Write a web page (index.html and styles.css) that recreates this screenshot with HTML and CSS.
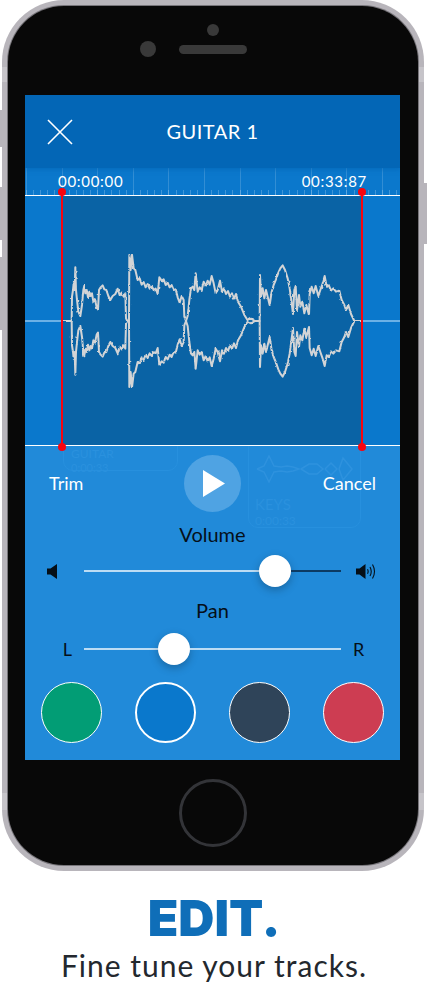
FILE: index.html
```html
<!DOCTYPE html>
<html lang="en">
<head>
    <meta charset="UTF-8">
    <meta name="viewport" content="width=device-width, initial-scale=1.0">
    <title>Edit</title>
    <link rel="stylesheet" href="styles.css">
</head>
<body>
    <div class="phone">
        <span class="side-btn side-mute"></span>
        <span class="side-btn side-up"></span>
        <span class="side-btn side-down"></span>
        <span class="side-btn side-power"></span>

        <div class="face">
            <div class="bezel-top">
                <span class="camera-dot"></span>
                <div class="sensors">
                    <span class="lens"></span>
                    <span class="speaker"></span>
                </div>
            </div>

            <div class="screen">
                <div class="header">
                    <svg class="close-icon" width="26" height="26" viewBox="0 0 26 26">
                        <path d="M1 1L25 25M25 1L1 25" stroke="#fff" stroke-width="1.6" fill="none"/>
                    </svg>
                    <span class="title">GUITAR 1</span>
                </div>

                <div class="ruler">
                    <span>00:00:00</span>
                    <span>00:33:87</span>
                </div>

                <div class="wave-band">
                    <div class="wave-side"></div>
                    <div class="selection">
                        <svg class="wave" width="300" height="249" viewBox="126 18 900 747">
                            <defs>
                                <filter id="wave-fuzz" x="0" y="0" width="100%" height="100%">
                                    <feTurbulence type="fractalNoise" baseFrequency="0.1" numOctaves="1" seed="4"/>
                                    <feDisplacementMap in="SourceGraphic" scale="8" xChannelSelector="R" yChannelSelector="G"/>
                                </filter>
                                <path id="wave-half" d="M126 393H150L152 393L153 320L156 300L158 280L161 300L163 232L165 300L168 330L172 365L178 378L183 345L187 300L190 287L193 310L197 300L201 322L205 305L209 318L213 310L217 335L222 328L227 352L231 358L234 300L238 293L245 286L250 298L256 300L262 318L268 330L275 318L283 312L290 296L296 316L302 308L308 320L313 310L315 385L319 393L324 393L325 195L329 240L333 194L338 235L343 240L350 270L356 265L362 284L368 276L374 292L380 282L386 296L392 288L398 300L404 296L410 312L415 262L422 272L428 268L434 285L440 278L446 292L452 285L458 300L464 298L470 322L476 338L482 318L488 330L490 380L495 393L500 378L505 330L510 295L515 290L520 300L524 250L530 305L536 292L542 300L548 275L554 288L560 272L566 284L572 258L578 280L584 310L590 300L597 272L603 305L609 295L615 312L621 303L627 320L633 310L639 326L645 312L651 335L660 350L670 375L680 391L690 386L702 393H714L716 393L717 255L720 320L725 295L730 325L735 300L740 320L746 345L752 305L758 285L765 268L772 248L778 235L785 226L792 240L800 265L806 295L812 340L816 372L820 300L824 288L828 360L834 315L838 350L844 335L850 370L856 345L864 375L866 312L872 290L878 310L884 288L892 318L898 300L905 280L911 258L917 290L923 285L930 302L937 295L945 305L955 302L962 330L970 345L975 360L982 345L990 372L1000 393H1026"/>
                            </defs>
                            <g filter="url(#wave-fuzz)">
                                <use href="#wave-half" class="wave-line"/>
                                <use href="#wave-half" class="wave-line" transform="translate(0 786) scale(1 -1)"/>
                            </g>
                        </svg>
                    </div>
                    <div class="wave-side"></div>

                    <span class="trim-handle trim-left"></span>
                    <span class="trim-handle trim-right"></span>
                </div>

                <div class="controls">
                    <div class="ghost-card ghost-guitar">
                        <span>GUITAR</span>
                        <small>0:00:33</small>
                    </div>
                    <div class="ghost-card ghost-keys">
                        <svg width="100" height="28" viewBox="0 0 100 28">
                            <path d="M2 14L9 11L14 1L19 11L26 12L32 11L38 12L44 14L38 16L32 17L26 16L19 17L14 27L9 17L2 14M46 14L54 9L62 9L68 14L62 19L54 19L46 14M70 14L76 8L82 14L76 20L70 14M84 14L88 3L97 14L88 25L84 14" stroke="#2e92de" stroke-width="1.5" fill="none"/>
                        </svg>
                        <span>KEYS</span>
                        <small>0:00:33</small>
                    </div>

                    <div class="transport">
                        <span class="trim-label">Trim</span>
                        <div class="play-btn">
                            <svg width="24" height="28" viewBox="0 0 24 28">
                                <path d="M1 0L23 13.5L1 27Z" fill="#fff"/>
                            </svg>
                        </div>
                        <span class="cancel-label">Cancel</span>
                    </div>

                    <div class="control-label volume-label">Volume</div>
                    <div class="slider-row volume-row">
                        <div class="slider-start icon-start">
                            <svg width="10" height="15" viewBox="0 0 10 15">
                                <path d="M0 4.5H3.5L10 0V15L3.5 10.5H0Z" fill="#050f18"/>
                            </svg>
                        </div>
                        <div class="slider">
                            <span class="track track-on volume-fill"></span>
                            <span class="thumb"></span>
                            <span class="track track-off"></span>
                        </div>
                        <div class="slider-end icon-end">
                            <svg width="20" height="17" viewBox="0 0 20 17">
                                <path d="M0 5.5H3.5L9.5 1V16L3.5 11.5H0Z" fill="#050f18"/>
                                <path d="M11.5 6.2Q12.8 8.5 11.5 10.8M14 4Q16.5 8.5 14 13M16.5 1.5Q20.5 8.5 16.5 15.5" stroke="#050f18" stroke-width="1.1" fill="none"/>
                            </svg>
                        </div>
                    </div>

                    <div class="control-label pan-label">Pan</div>
                    <div class="slider-row pan-row">
                        <div class="slider-start letter-start">L</div>
                        <div class="slider">
                            <span class="track track-on pan-fill"></span>
                            <span class="thumb"></span>
                            <span class="track track-on track-rest"></span>
                        </div>
                        <div class="slider-end letter-end">R</div>
                    </div>

                    <div class="swatches">
                        <span class="swatch swatch-green"></span>
                        <span class="swatch swatch-blue"></span>
                        <span class="swatch swatch-navy"></span>
                        <span class="swatch swatch-red"></span>
                    </div>
                </div>
            </div>

            <div class="home-btn"></div>
        </div>
    </div>

    <div class="caption">
        <h1>EDIT.</h1>
        <p>Fine tune your tracks.</p>
    </div>
</body>
</html>
```

FILE: styles.css
```css
body {
    margin: 0;
    padding: 0;
    background-color: #fff;
    font-family: Lato, "Open Sans", sans-serif;
}

.phone {
    position: relative;
    box-sizing: border-box;
    width: 422px;
    height: 871px;
    margin-left: 2px;
    padding: 6px;
    border-radius: 62px;
    background: linear-gradient(to bottom,
        #b8b5bb 0, #b8b5bb 67px, #c6c4c9 67px, #c6c4c9 82px, #b8b5bb 82px,
        #b8b5bb 793px, #c6c4c9 793px, #c6c4c9 810px, #b8b5bb 810px);
}

.side-btn {
    position: absolute;
    width: 3px;
    background-color: #b8b5bb;
}

.side-mute {
    left: -2px;
    top: 110px;
    height: 37px;
}

.side-up {
    left: -2px;
    top: 187px;
    height: 53px;
}

.side-down {
    left: -2px;
    top: 257px;
    height: 73px;
}

.side-power {
    right: -3px;
    top: 183px;
    height: 61px;
}

.face {
    height: 859px;
    border-radius: 56px;
    background-color: #080808;
    box-shadow: 0 0 0 1px #77757a;
    overflow: hidden;
}

.bezel-top {
    height: 89px;
    display: flex;
    flex-direction: column;
    align-items: center;
    box-sizing: border-box;
    padding-top: 18px;
}

.camera-dot {
    width: 12px;
    height: 12px;
    border-radius: 50%;
    background-color: #393939;
}

.sensors {
    display: flex;
    align-items: center;
    gap: 23px;
    margin-top: 5px;
    align-self: flex-start;
    margin-left: 132px;
}

.lens {
    width: 16px;
    height: 16px;
    border-radius: 50%;
    background-color: #393939;
}

.speaker {
    width: 68px;
    height: 9px;
    border-radius: 5px;
    background-color: #393939;
}

.screen {
    width: 375px;
    height: 665px;
    margin-left: 17px;
    color: #fff;
    background-color: #218ad9;
    overflow: hidden;
}

.header {
    position: relative;
    z-index: 1;
    height: 73px;
    box-sizing: border-box;
    padding-bottom: 2px;
    display: flex;
    align-items: center;
    justify-content: center;
    background-color: #0366b6;
    box-shadow: 0 2px 4px rgba(3, 102, 182, 0.6);
}

.close-icon {
    position: absolute;
    left: 22px;
    top: 24px;
}

.title {
    font-size: 20px;
    letter-spacing: 0.5px;
}

.ruler {
    height: 27px;
    box-sizing: border-box;
    display: flex;
    justify-content: space-between;
    padding: 4px 33px 0 33px;
    font-size: 15px;
    line-height: 18px;
    letter-spacing: 0.7px;
    background-color: #0b78cc;
    background-image:
        repeating-linear-gradient(to right, rgba(255, 255, 255, 0.16) 0, rgba(255, 255, 255, 0.16) 1px, transparent 1px, transparent 35.6px),
        repeating-linear-gradient(to right, rgba(255, 255, 255, 0.22) 0, rgba(255, 255, 255, 0.22) 1px, transparent 1px, transparent 7.12px);
    background-size: 100% 100%, 100% 5px;
    background-position: 1px 0, 1px 100%;
    background-repeat: no-repeat;
}

.wave-band {
    position: relative;
    z-index: 1;
    display: flex;
    height: 251px;
    box-sizing: border-box;
    border-top: 1px solid #fff;
    border-bottom: 1px solid #fff;
    background-color: #0a78cc;
}

.wave-side {
    flex: 1;
    display: flex;
    align-items: center;
}

.wave-side::after {
    content: "";
    width: 100%;
    height: 2px;
    background-color: #6cb1e6;
}

.selection {
    width: 300px;
    height: 249px;
    background-color: #0a63a5;
}

.wave {
    display: block;
}

.wave-line {
    fill: none;
    stroke: #d2d4d6;
    stroke-width: 6;
    stroke-linejoin: round;
}

.trim-handle {
    position: absolute;
    top: -3px;
    bottom: -3px;
    width: 2px;
    background-color: #f8050f;
}

.trim-handle::before,
.trim-handle::after {
    content: "";
    position: absolute;
    left: -3px;
    width: 8px;
    height: 8px;
    border-radius: 50%;
    background-color: #f8050f;
}

.trim-handle::before {
    top: -5px;
}

.trim-handle::after {
    bottom: -3px;
}

.trim-left {
    left: 36px;
}

.trim-right {
    left: 336px;
}

.controls {
    position: relative;
    height: 314px;
    overflow: hidden;
}

.ghost-card {
    position: absolute;
    box-sizing: border-box;
    border: 1px solid #2790de;
    border-radius: 10px;
    color: #2a91de;
    font-size: 15px;
    line-height: 18px;
}

.ghost-card span,
.ghost-card small {
    display: block;
}

.ghost-card small {
    font-size: 12px;
    line-height: 15px;
}

.ghost-guitar {
    left: 38px;
    top: -16px;
    width: 115px;
    height: 41px;
    padding: 15px 0 0 7px;
    font-size: 12px;
    line-height: 15px;
}

.ghost-guitar small {
    font-size: 11px;
    line-height: 14px;
}

.ghost-keys {
    left: 223px;
    top: -8px;
    width: 113px;
    height: 90px;
    padding: 16px 0 0 6px;
}

.ghost-keys svg {
    display: block;
    margin-bottom: 12px;
}

.transport {
    position: relative;
    display: grid;
    grid-template-columns: 1fr auto 1fr;
    align-items: center;
    padding: 9px 24px 0 24px;
    font-size: 18px;
    line-height: 20px;
}

.trim-label,
.cancel-label {
    margin-top: -2px;
}

.cancel-label {
    text-align: right;
}

.play-btn {
    width: 57px;
    height: 57px;
    border-radius: 50%;
    background-color: #4fa3e3;
    display: flex;
    align-items: center;
    justify-content: center;
}

.play-btn svg {
    margin-left: 3px;
}

.control-label {
    position: relative;
    text-align: center;
    color: #050f18;
    font-size: 20px;
    line-height: 22px;
}

.volume-label {
    margin-top: 11px;
}

.volume-row {
    margin-top: 10px;
}

.pan-label {
    margin-top: 12px;
}

.pan-row {
    margin-top: 12px;
}

.slider-row {
    position: relative;
    display: grid;
    grid-template-columns: 59px 257px 59px;
    align-items: center;
    color: #050f18;
    font-size: 18px;
}

.slider-start {
    text-align: right;
}

.slider-start svg,
.slider-end svg {
    display: block;
}

.icon-start {
    display: flex;
    justify-content: flex-end;
    padding-right: 27px;
}

.letter-start {
    padding-right: 12px;
}

.icon-end {
    padding-left: 15px;
}

.letter-end {
    padding-left: 12px;
}

.slider {
    display: flex;
    align-items: center;
    height: 32px;
}

.volume-fill {
    width: 175px;
}

.pan-fill {
    width: 74px;
}

.track {
    display: block;
    height: 2px;
}

.track-on {
    background-color: #bcdcf4;
}

.track-off,
.track-rest {
    flex: 1;
}

.track-off {
    background-color: #0c3a63;
}

.thumb {
    flex: none;
    width: 32px;
    height: 32px;
    border-radius: 50%;
    background-color: #fff;
    box-shadow: 0 3px 8px rgba(0, 0, 0, 0.25);
}

.swatches {
    position: relative;
    display: flex;
    justify-content: space-between;
    padding: 0 16px;
    margin-top: 17px;
}

.swatch {
    box-sizing: border-box;
    width: 61px;
    height: 61px;
    border-radius: 50%;
    border: 1px solid #fff;
}

.swatch-green {
    background-color: #029d75;
}

.swatch-blue {
    background-color: #0a78cc;
    border-width: 2px;
}

.swatch-navy {
    background-color: #2f4459;
}

.swatch-red {
    background-color: #cd3d52;
}

.home-btn {
    box-sizing: border-box;
    width: 68px;
    height: 68px;
    margin: 19px auto 0 auto;
    border: 3px solid #333438;
    border-radius: 50%;
}

.caption {
    text-align: center;
    width: 428px;
}

.caption h1 {
    margin: 17px 0 0 0;
    font-family: Inter, sans-serif;
    font-size: 50px;
    line-height: 60px;
    font-weight: 900;
    color: #0f6eb8;
}

.caption p {
    margin: -1px 0 0 0;
    font-size: 30px;
    line-height: 36px;
    letter-spacing: 1px;
    color: #23282e;
}
```
